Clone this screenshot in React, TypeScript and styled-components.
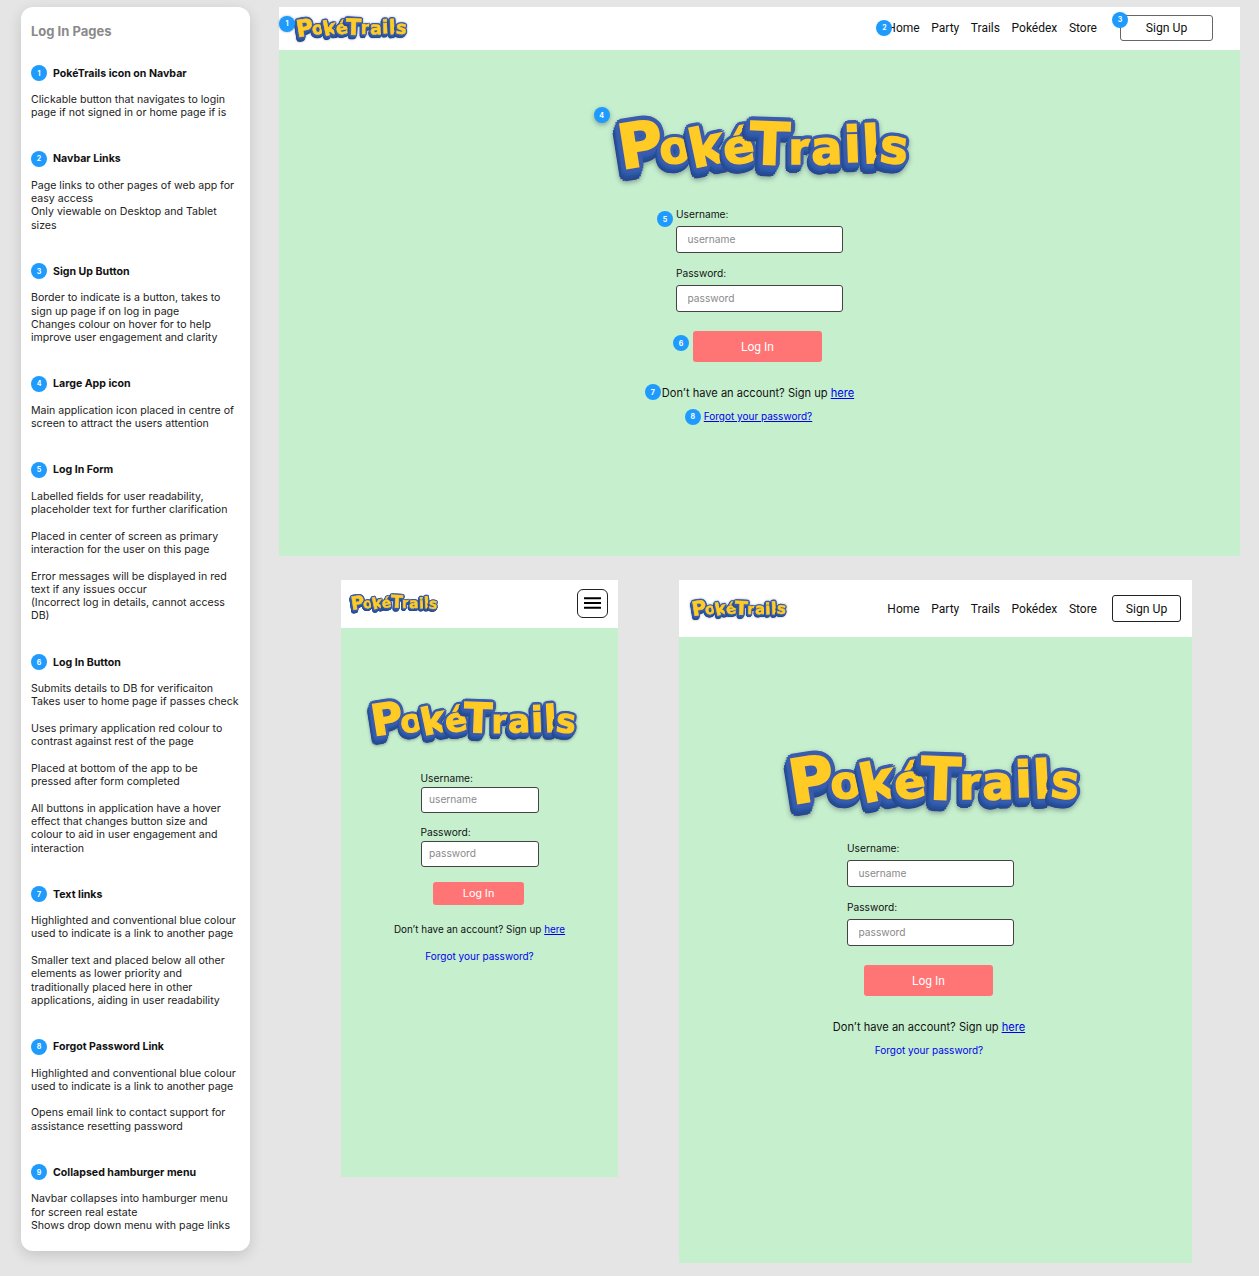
import { createGlobalStyle, styled } from "styled-components";

type Variant = "desktop" | "mobile" | "tablet";

const GlobalStyle = createGlobalStyle`
  html, body {
    margin: 0;
    padding: 0;
    background: #e5e5e5;
    font-family: "Inter", "Liberation Sans", sans-serif;
  }
  * { box-sizing: border-box; }
`;

const Page = styled.div`
  display: flex;
  align-items: flex-start;
  gap: 29px;
  width: 1259px;
  height: 1276px;
  padding: 7px 19px 0 21px;
  overflow: hidden;
`;

const Sidebar = styled.aside`
  width: 229px;
  height: 1244px;
  flex: none;
  padding: 16px 10px 0;
  background: #fff;
  border-radius: 12px;
  box-shadow: 0 4px 14px rgba(0, 0, 0, 0.14);
`;

const SideTitle = styled.h1`
  margin: 0 0 25px;
  font-size: 13px;
  line-height: 17px;
  font-weight: 700;
  color: #8a8a8a;
`;

const Note = styled.section`
  margin-bottom: 31.3px;
`;

const NoteHead = styled.div`
  display: flex;
  align-items: center;
  gap: 6px;
  height: 16px;
  margin-bottom: 12px;
  font-size: 10.6px;
  font-weight: 700;
  color: #111;
`;

const Dot = styled.span`
  display: flex;
  align-items: center;
  justify-content: center;
  width: 16px;
  height: 16px;
  flex: none;
  border-radius: 50%;
  background: #1e9bfd;
  color: #fff;
  font-family: "Inter", sans-serif;
  font-size: 7px;
  font-weight: 700;
  line-height: 1;
  text-decoration: none;
  -webkit-text-stroke: 0;
`;

const Badge = styled(Dot)<{ $left: number; $top: number }>`
  position: absolute;
  left: ${(p) => p.$left}px;
  top: ${(p) => p.$top}px;
  z-index: 2;
`;

const NoteText = styled.p`
  margin: 0 0 13.3px;
  font-size: 10.6px;
  line-height: 13.3px;
  color: #222;
  white-space: pre;
  &:last-child { margin-bottom: 0; }
`;

const Content = styled.main`
  width: 961px;
  flex: none;
`;

const Row = styled.div`
  display: flex;
  align-items: flex-start;
  margin-top: 24px;
  padding-left: 62px;
  gap: 61px;
`;

const Frame = styled.div<{ $variant: Variant }>`
  flex: none;
  display: flex;
  flex-direction: column;
  background: #c6efce;
  width: ${(p) => ({ desktop: 961, mobile: 277, tablet: 513 }[p.$variant])}px;
  height: ${(p) => ({ desktop: 549, mobile: 597, tablet: 683 }[p.$variant])}px;
`;

const Nav = styled.nav<{ $variant: Variant }>`
  display: flex;
  align-items: center;
  justify-content: space-between;
  flex: none;
  background: #fff;
  height: ${(p) => ({ desktop: 43, mobile: 48, tablet: 57 }[p.$variant])}px;
  padding: ${(p) =>
    ({ desktop: "0 27px 2px 17px", mobile: "0 10px 2px 10px", tablet: "0 11px 0 13px" }[p.$variant])};
`;

const NavRight = styled.div<{ $gap: number }>`
  display: flex;
  align-items: center;
  gap: ${(p) => p.$gap}px;
`;

const NavLinks = styled.div`
  position: relative;
  display: flex;
  gap: 11.6px;
`;

const NavLink = styled.span`
  font-family: "Roboto", "Inter", sans-serif;
  font-size: 12px;
  line-height: 16px;
  color: #111;
`;

const SignUp = styled.button<{ $wide: boolean }>`
  position: relative;
  width: ${(p) => (p.$wide ? 93 : 69)}px;
  height: ${(p) => (p.$wide ? 26 : 27)}px;
  padding: 0;
  background: #fff;
  border: 1px solid ${(p) => (p.$wide ? "#666" : "#222")};
  border-radius: 3px;
  font-family: "Roboto", "Inter", sans-serif;
  font-size: 12.2px;
  color: #111;
`;

const Burger = styled.button`
  display: flex;
  align-items: center;
  justify-content: center;
  width: 31px;
  height: 29px;
  padding: 0;
  background: #fff;
  border: 1px solid #222;
  border-radius: 6px;
`;

const Main = styled.div<{ $variant: Variant }>`
  display: flex;
  flex-direction: column;
  align-items: center;
  padding-top: ${(p) => ({ desktop: 62, mobile: 68, tablet: 110 }[p.$variant])}px;
  padding-right: ${(p) => (p.$variant === "tablet" ? 10 : 0)}px;
`;

const LogoMark = styled.div<{ $size: number; $shift?: number }>`
  position: relative;
  display: inline-flex;
  align-items: center;
  flex: none;
  height: 1.34em;
  font-family: "DejaVu Sans", "Liberation Sans", sans-serif;
  font-size: ${(p) => p.$size}px;
  font-weight: 700;
  line-height: 1;
  white-space: nowrap;
  color: #ffcb24;
  margin-left: ${(p) => p.$shift ?? 0}px;
  filter: drop-shadow(0.02em 0.05em 0.05em rgba(30, 50, 60, 0.4));
`;

// fat yellow letter, blue ring round it, darker blue block below-left
const ring = (r: number, dx: number, dy: number, colour: string) =>
  Array.from({ length: 12 }, (_, i) => {
    const a = (i / 12) * Math.PI * 2;
    return `${(dx + Math.cos(a) * r).toFixed(3)}em ${(dy + Math.sin(a) * r).toFixed(3)}em 0 ${colour}`;
  }).join(", ");

const LOGO_SHADOW = [
  ring(0.085, 0, 0, "#3b5cad"),
  ring(0.085, -0.02, 0.04, "#2a5aa8"),
  ring(0.085, -0.04, 0.08, "#265099"),
  ring(0.085, -0.06, 0.12, "#2a478f"),
].join(", ");

const LogoLetter = styled.span<{ $scale: number; $turn: number; $rise: number; $pull: number }>`
  display: inline-block;
  font-size: ${(p) => p.$scale}em;
  margin-left: ${(p) => p.$pull}em;
  transform: translateY(${(p) => p.$rise}em) rotate(${(p) => p.$turn}deg);
  -webkit-text-stroke: 0.03em #ffcb24;
  text-shadow: ${LOGO_SHADOW};
`;

const LogoSpacer = styled.div<{ $height: number }>`
  height: ${(p) => p.$height}px;
  flex: none;
`;

const Field = styled.div<{ $compact: boolean }>`
  position: relative;
  width: ${(p) => (p.$compact ? 118 : 167)}px;
  margin-bottom: ${(p) => (p.$compact ? 13 : 14)}px;
`;

const Label = styled.label<{ $compact: boolean }>`
  display: block;
  height: 13px;
  margin-bottom: ${(p) => (p.$compact ? 2 : 5)}px;
  font-size: 10.2px;
  line-height: 13px;
  color: #111;
`;

const Input = styled.input<{ $compact: boolean }>`
  display: block;
  width: 100%;
  height: ${(p) => (p.$compact ? 26 : 27)}px;
  padding: 0 ${(p) => (p.$compact ? 7.5 : 10.5)}px 2px;
  background: #fff;
  border: 1px solid #444;
  border-radius: 3px;
  font-family: "Inter", sans-serif;
  font-size: 10.2px;
  &::placeholder { color: #8a8a8a; opacity: 1; }
`;

const LogIn = styled.button<{ $compact: boolean; $nudge: number }>`
  position: relative;
  display: block;
  width: ${(p) => (p.$compact ? 91 : 129)}px;
  height: ${(p) => (p.$compact ? 23 : 31)}px;
  margin: ${(p) => (p.$compact ? 2 : 5)}px ${(p) => p.$nudge}px 0 0;
  padding: 0;
  background: #ff7474;
  border: 0;
  border-radius: 3px;
  color: #fff;
  font-family: "Roboto", "Inter", sans-serif;
  font-size: ${(p) => (p.$compact ? 11.5 : 12)}px;
`;

const Prompt = styled.p<{ $compact: boolean; $nudge: number }>`
  position: relative;
  margin: ${(p) => (p.$compact ? 17 : 23)}px ${(p) => p.$nudge}px 0 0;
  font-size: ${(p) => (p.$compact ? 9.9 : 11.1)}px;
  line-height: ${(p) => (p.$compact ? 14 : 16)}px;
  color: #111;
`;

const TextLink = styled.a`
  color: #0000ee;
  text-decoration: underline;
`;

const Forgot = styled.a<{ $compact: boolean; $plain: boolean; $nudge: number }>`
  position: relative;
  display: block;
  margin: ${(p) => (p.$compact ? 14 : 8.5)}px ${(p) => p.$nudge}px 0 0;
  font-size: 10px;
  line-height: 13px;
  color: #0000ee;
  text-decoration: ${(p) => (p.$plain ? "none" : "underline")};
`;

const LETTERS: [string, number, number, number, number][] = [
  ["P", 1.24, -9, 0.0, 0],
  ["o", 0.92, -6, 0.07, -0.08],
  ["k", 1.06, -12, 0.04, -0.02],
  ["é", 0.94, -8, 0.05, -0.03],
  ["T", 1.18, 2, -0.01, -0.07],
  ["r", 0.9, 0, 0.08, -0.04],
  ["a", 0.94, -2, 0.07, 0.02],
  ["i", 1.0, -2, 0.02, 0.03],
  ["l", 1.06, -3, 0.0, 0.02],
  ["s", 0.96, 6, 0.05, 0],
];

function Logo({ size, shift, children }: { size: number; shift?: number; children?: React.ReactNode }) {
  return (
    <LogoMark $size={size} $shift={shift}>
      {children}
      {LETTERS.map(([ch, scale, turn, rise, pull]) => (
        <LogoLetter key={ch} $scale={scale} $turn={turn} $rise={rise} $pull={pull}>
          {ch}
        </LogoLetter>
      ))}
    </LogoMark>
  );
}

const NOTES = [
  { title: "PokéTrails icon on Navbar", text: ["Clickable button that navigates to login\npage if not signed in or home page if is"] },
  { title: "Navbar Links", text: ["Page links to other pages of web app for\neasy access\nOnly viewable on Desktop and Tablet\nsizes"] },
  { title: "Sign Up Button", text: ["Border to indicate is a button, takes to\nsign up page if on log in page\nChanges colour on hover for to help\nimprove user engagement and clarity"] },
  { title: "Large App icon", text: ["Main application icon placed in centre of\nscreen to attract the users attention"] },
  {
    title: "Log In Form",
    text: [
      "Labelled fields for user readability,\nplaceholder text for further clarification",
      "Placed in center of screen as primary\ninteraction for the user on this page",
      "Error messages will be displayed in red\ntext if any issues occur\n(Incorrect log in details, cannot access\nDB)",
    ],
  },
  {
    title: "Log In Button",
    text: [
      "Submits details to DB for verificaiton\nTakes user to home page if passes check",
      "Uses primary application red colour to\ncontrast against rest of the page",
      "Placed at bottom of the app to be\npressed after form completed",
      "All buttons in application have a hover\neffect that changes button size and\ncolour to aid in user engagement and\ninteraction",
    ],
  },
  {
    title: "Text links",
    text: [
      "Highlighted and conventional blue colour\nused to indicate is a link to another page",
      "Smaller text and placed below all other\nelements as lower priority and\ntraditionally placed here in other\napplications, aiding in user readability",
    ],
  },
  {
    title: "Forgot Password Link",
    text: [
      "Highlighted and conventional blue colour\nused to indicate is a link to another page",
      "Opens email link to contact support for\nassistance resetting password",
    ],
  },
  { title: "Collapsed hamburger menu", text: ["Navbar collapses into hamburger menu\nfor screen real estate\nShows drop down menu with page links"] },
];

const LOGO_SIZES = {
  desktop: { nav: 18.8, main: 49.5, shift: 7, after: 30, button: 4, text: 3 },
  mobile: { nav: 14.8, main: 35, shift: -12, after: 29, button: 2, text: 0 },
  tablet: { nav: 16, main: 49.5, shift: 7, after: 29, button: 4, text: 3 },
};

function Screen({ variant }: { variant: Variant }) {
  const compact = variant === "mobile";
  const marked = variant === "desktop";
  const sizes = LOGO_SIZES[variant];

  return (
    <Frame $variant={variant}>
      <Nav $variant={variant}>
        <Logo size={sizes.nav}>{marked && <Badge $left={-17} $top={1}>1</Badge>}</Logo>
        {compact ? (
          <Burger aria-label="menu">
            <svg width="17" height="12" viewBox="0 0 17 12">
              <path d="M0.5 1.2h16M0.5 6h16M0.5 10.8h16" stroke="#000" strokeWidth="2" strokeLinecap="round" />
            </svg>
          </Burger>
        ) : (
          <NavRight $gap={marked ? 23 : 15}>
            <NavLinks>
              {marked && <Badge $left={-11} $top={0}>2</Badge>}
              <NavLink>Home</NavLink>
              <NavLink>Party</NavLink>
              <NavLink>Trails</NavLink>
              <NavLink>Pokédex</NavLink>
              <NavLink>Store</NavLink>
            </NavLinks>
            <SignUp $wide={marked}>
              {marked && <Badge $left={-9} $top={-4}>3</Badge>}
              Sign Up
            </SignUp>
          </NavRight>
        )}
      </Nav>
      <Main $variant={variant}>
        <Logo size={sizes.main} shift={sizes.shift}>
          {marked && <Badge $left={-24} $top={-5}>4</Badge>}
        </Logo>
        <LogoSpacer $height={sizes.after} />
        <Field $compact={compact}>
          {marked && <Badge $left={-19} $top={3}>5</Badge>}
          <Label $compact={compact}>Username:</Label>
          <Input $compact={compact} placeholder="username" readOnly />
        </Field>
        <Field $compact={compact}>
          <Label $compact={compact}>Password:</Label>
          <Input $compact={compact} placeholder="password" readOnly />
        </Field>
        <LogIn $compact={compact} $nudge={sizes.button}>
          {marked && <Badge $left={-20} $top={4}>6</Badge>}
          Log In
        </LogIn>
        <Prompt $compact={compact} $nudge={sizes.text}>
          {marked && <Badge $left={-17} $top={-1}>7</Badge>}
          Don’t have an account? Sign up <TextLink>here</TextLink>
        </Prompt>
        <Forgot $compact={compact} $plain={!marked} $nudge={sizes.text}>
          {marked && <Badge $left={-19} $top={-1}>8</Badge>}
          Forgot your password?
        </Forgot>
      </Main>
    </Frame>
  );
}

export default function App() {
  return (
    <Page>
      <GlobalStyle />
      <Sidebar>
        <SideTitle>Log In Pages</SideTitle>
        {NOTES.map((note, i) => (
          <Note key={note.title}>
            <NoteHead>
              <Dot>{i + 1}</Dot>
              {note.title}
            </NoteHead>
            {note.text.map((para) => (
              <NoteText key={para}>{para}</NoteText>
            ))}
          </Note>
        ))}
      </Sidebar>
      <Content>
        <Screen variant="desktop" />
        <Row>
          <Screen variant="mobile" />
          <Screen variant="tablet" />
        </Row>
      </Content>
    </Page>
  );
}
